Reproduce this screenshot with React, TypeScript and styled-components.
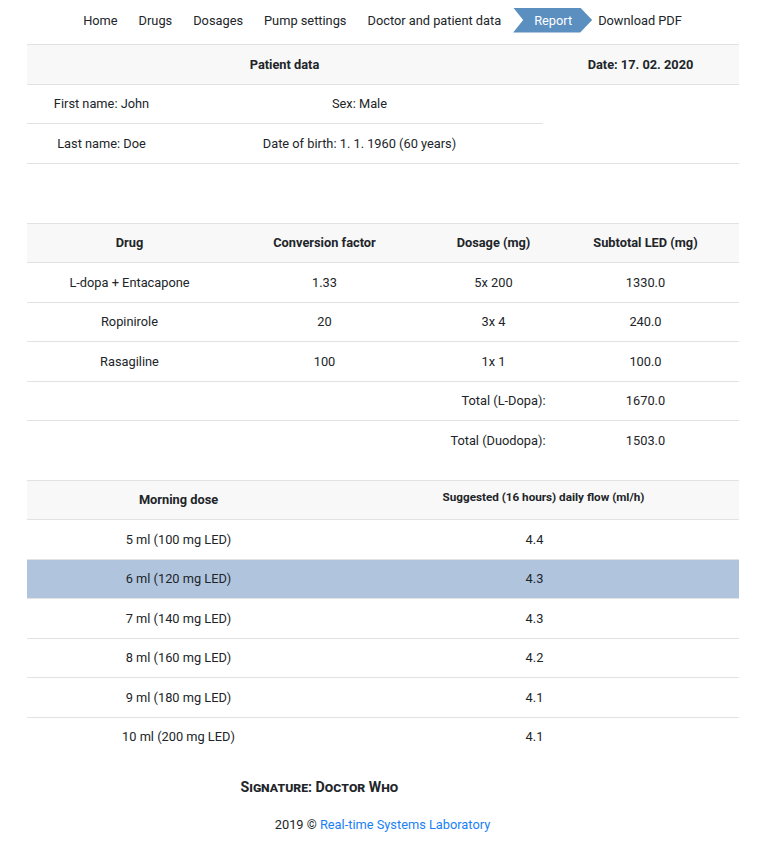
import React from "react";
import styled, { createGlobalStyle } from "styled-components";

const Global = createGlobalStyle`
  html, body { margin: 0; padding: 0; background: #fff; }
  body { font-family: Roboto, "Liberation Sans", sans-serif; font-size: 12.8px; color: #212529; }
`;

const Page = styled.div`
  width: 712px;
  margin: 0 auto;
  padding: 0 0 12px 0;
  position: relative;
  left: -3px;
`;

const Nav = styled.nav`
  display: flex;
  justify-content: center;
  align-items: center;
  height: 40px;
  gap: 21px;
  padding-left: 0px;
`;

const NavItem = styled.span<{ $active?: boolean }>`
  font-size: 12.8px;
  color: ${(p) => (p.$active ? "#fff" : "#212529")};
  ${(p) =>
    p.$active
      ? `
    background: #5b8fc0;
    height: 25px;
    line-height: 25px;
    padding: 0 20px 0 21px;
    margin: 0 -15px 0 -9px;
    clip-path: polygon(0 0, calc(100% - 12px) 0, 100% 50%, calc(100% - 12px) 100%, 0 100%, 10px 50%);
  `
      : ""}
`;

const Table = styled.div<{ $cols: string }>`
  display: grid;
  grid-template-columns: ${(p) => p.$cols};
  border-top: 1px solid #e2e2e2;
`;

const Cell = styled.div<{ $head?: boolean; $span?: number; $align?: string; $noBorder?: boolean; $hl?: boolean; $pr?: number; $pl?: number }>`
  height: 38.5px;
  display: flex;
  align-items: center;
  justify-content: ${(p) => p.$align || "center"};
  ${(p) => (p.$span ? `grid-column: span ${p.$span};` : "")}
  background: ${(p) => (p.$hl ? "#b0c4de" : p.$head ? "#f8f8f8" : "transparent")};
  border-bottom: 1px solid ${(p) => (p.$noBorder ? "transparent" : "#e2e2e2")};
  font-weight: ${(p) => (p.$head ? 700 : 400)};
  ${(p) => (p.$pr ? `padding-right: ${p.$pr}px;` : "")}
  ${(p) => (p.$pl ? `padding-left: ${p.$pl}px;` : "")}
  white-space: nowrap;
`;

const SmallHead = styled.span`
  font-size: 11.7px;
  position: relative;
  top: -3px;
`;

const Spacer = styled.div<{ $h: number }>`
  height: ${(p) => p.$h}px;
`;

const Signature = styled.div`
  font-weight: 700;
  font-variant: small-caps;
  font-size: 14.2px;
  padding-left: 214px;
  margin-top: 20px;
  height: 20px;
  line-height: 20px;
`;

const Footer = styled.footer`
  text-align: center;
  margin-top: 20px;
  font-size: 12.8px;
`;

const Link = styled.a`
  color: #1a7ff5;
  text-decoration: none;
`;

const drugs = [
  ["L-dopa + Entacapone", "1.33", "5x 200", "1330.0"],
  ["Ropinirole", "20", "3x 4", "240.0"],
  ["Rasagiline", "100", "1x 1", "100.0"],
];

const doses = [
  ["5 ml (100 mg LED)", "4.4"],
  ["6 ml (120 mg LED)", "4.3"],
  ["7 ml (140 mg LED)", "4.3"],
  ["8 ml (160 mg LED)", "4.2"],
  ["9 ml (180 mg LED)", "4.1"],
  ["10 ml (200 mg LED)", "4.1"],
];

export default function App() {
  return (
    <>
      <Global />
      <Page>
        <Nav>
          <NavItem>Home</NavItem>
          <NavItem>Drugs</NavItem>
          <NavItem>Dosages</NavItem>
          <NavItem>Pump settings</NavItem>
          <NavItem>Doctor and patient data</NavItem>
          <NavItem $active>Report</NavItem>
          <NavItem>Download PDF</NavItem>
        </Nav>
        <Spacer $h={4} />
        <Table $cols="150px 366px 196px">
          <Cell $head $span={2}>Patient data</Cell>
          <Cell $head>Date: 17. 02. 2020</Cell>
          <Cell>First name: John</Cell>
          <Cell>Sex: Male</Cell>
          <Cell $noBorder></Cell>
          <Cell>Last name: Doe</Cell>
          <Cell>Date of birth: 1. 1. 1960 (60 years)</Cell>
          <Cell></Cell>
        </Table>
        <Spacer $h={59} />
        <Table $cols="206px 184px 154px 150px 18px">
          <Cell $head>Drug</Cell>
          <Cell $head>Conversion factor</Cell>
          <Cell $head>Dosage (mg)</Cell>
          <Cell $head>Subtotal LED (mg)</Cell>
          <Cell $head></Cell>
          {drugs.map((r) => (
            <React.Fragment key={r[0]}>
              {r.map((c, i) => (
                <Cell key={i}>{c}</Cell>
              ))}
              <Cell></Cell>
            </React.Fragment>
          ))}
          <Cell $span={2}></Cell>
          <Cell $align="flex-end" $pr={25}>Total (L-Dopa):</Cell>
          <Cell>1670.0</Cell>
          <Cell></Cell>
          <Cell $span={2} $noBorder></Cell>
          <Cell $align="flex-end" $pr={25} $noBorder>Total (Duodopa):</Cell>
          <Cell $noBorder>1503.0</Cell>
          <Cell $noBorder></Cell>
        </Table>
        <Spacer $h={19} />
        <Table $cols="304px 408px">
          <Cell $head>Morning dose</Cell>
          <Cell $head $pl={18}><SmallHead>Suggested (16 hours) daily flow (ml/h)</SmallHead></Cell>
          {doses.map((r, idx) => (
            <React.Fragment key={r[0]}>
              <Cell $hl={idx === 1} $noBorder={idx === doses.length - 1}>{r[0]}</Cell>
              <Cell $hl={idx === 1} $noBorder={idx === doses.length - 1}>{r[1]}</Cell>
            </React.Fragment>
          ))}
        </Table>
        <Signature>Signature: Doctor Who</Signature>
        <Footer>
          2019 © <Link href="#">Real-time Systems Laboratory</Link>
        </Footer>
      </Page>
    </>
  );
}
